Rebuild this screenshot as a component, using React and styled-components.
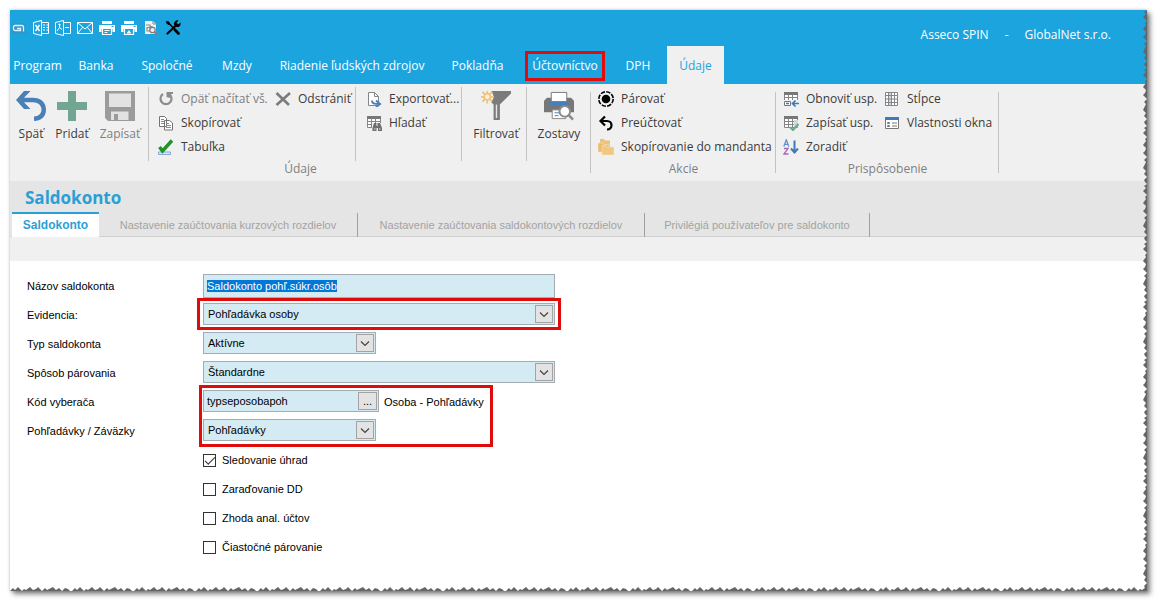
import React, { useEffect, useRef } from "react";
import styled, { createGlobalStyle } from "styled-components";

const GlobalStyle = createGlobalStyle`
  * { box-sizing: border-box; }
  body { margin: 0; background: #fff; }
  button, input, select { font: inherit; color: inherit; margin: 0; }
`;

const uiFont = `"Open Sans", "Noto Sans", sans-serif`;
const formFont = `"Liberation Sans", Arial, sans-serif`;

const Sheet = styled.main`
  position: relative;
  margin: 10px 17px 18px 10px;
  background: #fff;
  font-family: ${uiFont};
  font-size: 12px;
  line-height: 16px;
  color: #3b3b3b;
  box-shadow: 0 0 3px rgba(0, 0, 0, 0.2), 3px 3px 5px rgba(0, 0, 0, 0.5);
`;

const Tear = styled.svg`
  position: absolute;
  right: 0;
  bottom: 0;
  width: ${(p) => (p.$side ? "6px" : "100%")};
  height: ${(p) => (p.$side ? "100%" : "5px")};
  pointer-events: none;
`;

/* header */
const Header = styled.header`
  background: #1ca4df;
  color: #fff;
`;
const TopBar = styled.div`
  display: flex;
  justify-content: space-between;
  height: 36px;
  padding: 0 36px 0 1px;
`;
const QuickTools = styled.div`
  display: flex;
  gap: 6px;
  padding-top: 10px;
`;
const QuickButton = styled.button`
  width: 16px;
  height: 16px;
  padding: 0;
  border: 0;
  background: none;
  svg { display: block; }
`;
const AppTitle = styled.div`
  display: flex;
  gap: 16px;
  padding-top: 17px;
`;
const Menu = styled.nav`
  display: flex;
  height: 38px;
`;
const MenuTab = styled.button`
  position: relative;
  width: ${(p) => p.$w}px;
  margin-left: ${(p) => (p.$active ? 3 : 0)}px;
  padding: 2px 0 0;
  border: 0;
  white-space: nowrap;
  background: ${(p) => (p.$active ? "#f0f0f0" : "none")};
  color: ${(p) => (p.$active ? "#1ca4df" : "#fff")};
`;
const Marker = styled.span`
  position: absolute;
  inset: ${(p) => p.$inset};
  width: ${(p) => (p.$w ? `${p.$w}px` : "auto")};
  border: 3px solid #e00b0b;
  pointer-events: none;
`;

/* ribbon */
const Ribbon = styled.section`
  display: flex;
  height: 97px;
  background: #f0f0f0;
  padding-top: 3px;
`;
const Group = styled.div`
  position: relative;
  display: flex;
  flex-direction: column;
  width: ${(p) => p.$w}px;
  &::after {
    content: "";
    position: absolute;
    right: 0;
    top: 5px;
    bottom: 8px;
    width: 1px;
    background: #c3c3c3;
  }
`;
const GroupBody = styled.div`
  display: flex;
  height: 74px;
`;
const Caption = styled.div`
  text-align: center;
  color: #808080;
`;
const Cluster = styled.div`
  display: flex;
  width: ${(p) => p.$w}px;
  padding-left: ${(p) => p.$pad || 0}px;
  border-right: ${(p) => (p.$line ? "1px solid #c3c3c3" : "0")};
`;
const Column = styled.div`
  display: flex;
  flex-direction: column;
  width: ${(p) => (p.$w ? `${p.$w}px` : "auto")};
`;
const ToolRow = styled.button`
  display: flex;
  align-items: center;
  gap: 7px;
  height: 24px;
  padding: 0;
  border: 0;
  background: none;
  white-space: nowrap;
  color: ${(p) => (p.$muted ? "#7f7f7f" : "#3b3b3b")};
  svg { flex: none; }
`;
const BigTool = styled.button`
  display: flex;
  flex-direction: column;
  align-items: center;
  gap: 5px;
  width: ${(p) => p.$w}px;
  padding: 4px 0 0;
  border: 0;
  background: none;
  white-space: nowrap;
  color: ${(p) => (p.$muted ? "#7f7f7f" : "#3b3b3b")};
  svg { display: block; flex: none; }
`;

/* page title and tabs */
const TitleArea = styled.section`
  background: #e5e5e5;
  border-bottom: 1px solid #cfcfcf;
`;
const Title = styled.h1`
  margin: 0;
  padding: 5px 15px 0;
  height: 31px;
  font-size: 17px;
  line-height: 24px;
  font-weight: 700;
  color: #2a9fd6;
`;
const PageTabs = styled.div`
  display: flex;
  height: 25px;
  padding-left: 2px;
  margin-bottom: -1px;
  font-family: ${formFont};
`;
const PageTab = styled.button`
  width: ${(p) => p.$w}px;
  padding: 0 0 2px;
  border: 0;
  border-top: 2px solid ${(p) => (p.$active ? "#2a9fd6" : "transparent")};
  border-right: ${(p) => (p.$active ? "0" : "1px solid #a0a0a0")};
  background: ${(p) => (p.$active ? "#fff" : "none")};
  color: ${(p) => (p.$active ? "#2a9fd6" : "#a3a3a3")};
  font-weight: ${(p) => (p.$active ? 700 : 400)};
  font-size: ${(p) => (p.$active ? 12 : 11)}px;
  white-space: nowrap;
`;
const Strip = styled.div`
  height: 24px;
  background: #f0f0f0;
`;

/* form */
const Form = styled.form`
  padding: 10px 17px 30px;
  font-family: ${formFont};
  font-size: 11px;
  line-height: 13px;
  color: #000;
`;
const Row = styled.div`
  display: grid;
  grid-template-columns: 176px 1fr;
  align-items: start;
  height: 29px;
`;
const FieldLabel = styled.label`
  padding-top: 9px;
`;
const FieldNote = styled.span`
  padding-top: 9px;
`;
const Marked = styled.div`
  position: relative;
`;
const FieldBox = styled.div`
  position: relative;
  width: ${(p) => p.$w}px;
  height: ${(p) => (p.$tall ? 24 : 22)}px;
  margin-top: 3px;
`;
const fieldStyle = `
  display: block;
  width: 100%;
  height: 100%;
  padding: 0 4px;
  border: 1px solid #a3abb3;
  border-radius: 0;
  outline: 0;
  background: #d5ebf3;
`;
const TextInput = styled.input`
  ${fieldStyle}
  padding: 0 3px;
  &::selection { background: #0078d7; color: #fff; }
`;
const Select = styled.select`
  ${fieldStyle}
  appearance: none;
`;
const Arrow = styled.svg`
  position: absolute;
  top: 2px;
  right: 2px;
  width: 18px;
  height: 18px;
  pointer-events: none;
`;
const Picker = styled.button`
  position: absolute;
  top: 2px;
  right: 2px;
  width: 19px;
  height: 18px;
  padding: 0;
  border: 1px solid #a3a3a3;
  background: #e3e3e3;
  line-height: 13px;
`;
const Inline = styled.div`
  display: flex;
  align-items: flex-start;
  gap: 5px;
`;
const CheckLabel = styled.label`
  display: flex;
  align-items: center;
  gap: 6px;
  height: 29px;
  padding-top: 2px;
  margin-left: 176px;
`;
const CheckBox = styled.input`
  appearance: none;
  width: 13px;
  height: 13px;
  border: 1px solid #333;
  background: #fff;
  display: grid;
  place-items: center;
  &:checked::after {
    content: "";
    width: 9px;
    height: 4px;
    margin-bottom: 3px;
    border: solid #333;
    border-width: 0 0 1px 1px;
    transform: rotate(-45deg);
  }
`;

/* icons */
const Icon = ({ s = 16, box = 16, children }) => (
  <svg width={s} height={s} viewBox={`0 0 ${box} ${box}`} fill="none" aria-hidden="true">
    {children}
  </svg>
);

const LogoIcon = () => (
  <Icon>
    <rect x="1" y="3" width="14" height="11" fill="#3596c6" />
    <path d="M12.500 11.500V7Q12.500 5.500 11 5.500H4Q2.500 5.500 2.500 7V9Q2.500 10.500 4 10.500H9.500V8.500H6" stroke="#d9f2ff" strokeWidth="1.300" />
  </Icon>
);
const ExcelIcon = () => (
  <Icon>
    <path d="M.5 2.500 8.500.5v15l-8-2zM8.500 2.500h7v11h-7M10 5h2m1.500 0H15M10 7.500h2m1.500 0H15M10 10h2m1.500 0H15" stroke="#fff" />
    <path d="m2.500 5 4 6m0-6-4 6" stroke="#fff" strokeWidth="1.400" />
  </Icon>
);
const PdfIcon = () => (
  <Icon>
    <path d="M.5 2.500 8.500.5v15l-8-2zM8.500 2.500h7v11h-7M10 7.500h4" stroke="#fff" />
    <path d="M4.500 4v3.500L2 11m2.500-3.500L7 9.500M3.500 4.500c0-1 2-1 1.500 1" stroke="#fff" />
  </Icon>
);
const MailIcon = () => (
  <Icon>
    <path d="M.5 2.500h15v11H.5zM.5 2.500 8 9l7.500-6.500M.5 13.500 5.800 7.200m9.700 6.300L10.200 7.200" stroke="#fff" />
  </Icon>
);
const PrintIcon = ({ mark }) => (
  <Icon>
    <path d="M3 1h10v3H3zM0 5h16v7h-2.500V9h-11v3H0z" fill="#fff" />
    <path d="M3.500 8.500h9v6h-9z" stroke="#fff" strokeWidth="1.200" fill="#1ca4df" />
    {mark ? <path d="M8 10 10.500 13.500h-5z" fill="#fff" /> : <path d="M5.500 10.500h5M5.500 12.500h3" stroke="#fff" />}
    <path d="M12.500 6.500h2" stroke="#1ca4df" />
  </Icon>
);
const PreviewIcon = () => (
  <Icon>
    <path d="M2 1h8l3 3v10H2z" fill="#f2f2f2" />
    <path d="M10 1v3h3" stroke="#888" />
    <path d="M3 5h4v1.500h2V9H7V7.500H4V11h3" stroke="#8a8a8a" strokeWidth="1.200" />
    <circle cx="9.500" cy="10" r="2.700" fill="#e8f4fa" stroke="#8b7a78" strokeWidth="1.300" />
    <path d="m11.500 12 3 3" stroke="#8b7a78" strokeWidth="2" />
  </Icon>
);
const ToolsIcon = () => (
  <Icon>
    <path d="M3 2.500 13.500 13" stroke="#000" strokeWidth="1.600" />
    <path d="m10 10 3.500 3.500" stroke="#000" strokeWidth="2.800" strokeLinecap="round" />
    <path d="m1 1 3 .5L5 4 3.500 5 1.500 3.500z" fill="#000" />
    <path d="M12 4.500 2.500 13.500" stroke="#000" strokeWidth="2.200" strokeLinecap="round" />
    <path d="M13.500.5A3.500 3.500 0 0 0 9 4.500L11.500 7A3.500 3.500 0 0 0 15.500 2.500L13.500 4.300 11.800 4 11.700 2.400z" fill="#000" />
  </Icon>
);

const UndoBig = () => (
  <Icon s={30} box={30}>
    <path d="M8 0h6.500L8 6.800h9C24.500 6.800 30 11 30 18.500S25 30 18 30v-4.500c4.500 0 7.500-3 7.500-7S22 11.300 17 11.300H8l6.500 6.700H8L0 9z" fill="#4a80b8" />
  </Icon>
);
const PlusBig = () => (
  <Icon s={30} box={30}><path d="M11 0h8v11h11v8H19v11h-8V19H0v-8h11z" fill="#72a693" /></Icon>
);
const SaveBig = () => (
  <Icon s={30} box={30}>
    <path d="M0 0h30v30H3l-3-3z" fill="#9b9b9b" />
    <path d="M4 2.500h22V16H4zM6 20.500h17.500V29H13v-6H9v6H6z" fill="#e2e2e2" />
  </Icon>
);
const FilterBig = () => (
  <Icon s={30} box={31}>
    <path d="M11 0h20v2.500L19.500 14v16H13V14l-4-4z" fill="#7b7b7b" />
    <path d="M16 14v14" stroke="#e6e6e6" strokeWidth="1.500" />
    <circle cx="6.500" cy="6" r="6.500" fill="#f0f0f0" />
    <path d="M6.500-1v14M-.5 6h14M1.500 1l10 10M11.500 1l-10 10" stroke="#eec27a" strokeWidth="1.800" />
    <circle cx="6.500" cy="6" r="3.200" fill="#fff0cf" stroke="#eec27a" strokeWidth="1.500" />
  </Icon>
);
const ReportBig = () => (
  <Icon s={30} box={31}>
    <path d="M3 7h25l3 3v12H0V10z" fill="#777" />
    <path d="M7.500 1.500h16V11h-16z" fill="#fff" stroke="#777" />
    <path d="M6 11h19v4H6z" fill="#477fbd" />
    <path d="M8.500 19.500h14v9h-14z" fill="#fff" stroke="#888" />
    <path d="M11 22.500h6M11 25.500h4" stroke="#477fbd" />
    <circle cx="21.500" cy="21" r="5.500" fill="#fff" stroke="#8b8b8b" strokeWidth="2" />
    <path d="m25.500 25 4.500 4.500" stroke="#8b8b8b" strokeWidth="2.600" />
  </Icon>
);

const ReloadIcon = () => (
  <Icon>
    <path d="M5 3a5.500 5.500 0 1 0 6 0" stroke="#8d8d8d" strokeWidth="2.200" />
    <path d="M8.500 1H15v2h-3v4L8.500 6z" fill="#8d8d8d" />
  </Icon>
);
const CopyIcon = () => (
  <Icon>
    <path d="M1.500 1.500h5l2 2v8h-7zM6.500 5.500h5l3 2.500v7h-8z" fill="#fff" stroke="#747474" />
    <path d="M3 4.500h3M3 6.500h3M3 8.500h3M8 8.500h3M8 10.500h5M8 12.500h5" stroke="#6a93c4" />
  </Icon>
);
const TableCheckIcon = () => (
  <Icon>
    <path d="M.5 13h12v2.500H.5z" fill="#dbe6f7" stroke="#8ba6d4" />
    <path d="m1.500 8 3 4L14 1.500" stroke="#23922b" strokeWidth="3.400" />
  </Icon>
);
const DeleteIcon = () => (
  <Icon><path d="M1.500 2 14 14M15 2 1.500 14" stroke="#7b7b7b" strokeWidth="2.600" /></Icon>
);
const ExportIcon = () => (
  <Icon>
    <path d="M2.500 1.500h6l4 4v9h-10z" fill="#fff" stroke="#858585" />
    <path d="M8.500 1.500v4h4" stroke="#858585" />
    <path d="M6 9.500c0 3 2 3.500 7 3.500m-3-3.500 4 3.500-4 3" stroke="#4a80b8" strokeWidth="2" />
  </Icon>
);
const Grid = () => (
  <>
    <path d="M1.500 2.500h13v10h-13z" fill="#fff" stroke="#858585" />
    <path d="M1 2.500h14" stroke="#777" strokeWidth="3" />
    <path d="M1.500 6.500h13M1.500 9.500h13M5.500 3v9.500M9.500 3v9.500" stroke="#858585" />
  </>
);
const SearchIcon = () => (
  <Icon>
    <Grid />
    <path d="M6 8h10v8H6z" fill="#f0f0f0" />
    <path d="M8 8h2.500v3h1V8H14l2 5v3h-4v-3h-1.500v3H6.500v-3z" fill="#6f6f6f" />
    <path d="M8 14h1.500m3.500 0h1.500" stroke="#eee" />
  </Icon>
);
const RestoreIcon = () => (
  <Icon>
    <Grid />
    <path d="M0 9h16v7H0z" fill="#f0f0f0" />
    <path d="M1.500 10.500h6v4h-6z" fill="#fff" stroke="#777" />
    <path d="M3 12.500h3M9.500 12.500H16M12.500 9.500l-3 3 3 3" stroke="#3f79b8" strokeWidth="1.700" />
  </Icon>
);
const StoreIcon = () => (
  <Icon>
    <Grid />
    <path d="M11 5h4v6l-4 2z" fill="#c9dcd6" />
    <path d="m7 12 3 3 5.500-6" stroke="#72a693" strokeWidth="2.200" />
  </Icon>
);
const SortIcon = () => (
  <Icon>
    <path d="M.8 7.500 3.300.8 5.800 7.500M1.600 5.300H5" stroke="#5f93c9" strokeWidth="1.300" />
    <path d="M1 9.500h4L1 15h4.500" stroke="#a869b5" strokeWidth="1.300" />
    <path d="M11.500 1.500V13M8 9.500l3.500 4 3.500-4" stroke="#3f79b8" strokeWidth="2" />
  </Icon>
);
const ColumnsIcon = () => (
  <Icon>
    <path d="M1.500 1.500h12v13h-12z" fill="#fff" stroke="#858585" />
    <path d="M5 2h3v12H5z" fill="#c8dde5" />
    <path d="M4.500 2v12M7.500 2v12M10.500 2v12M2 4.500h11M2 8h11M2 11.500h11" stroke="#858585" />
  </Icon>
);
const PropsIcon = () => (
  <Icon>
    <path d="M1.500 2.500h13v11h-13z" fill="#fff" stroke="#777" />
    <path d="M1 2h14v3H1z" fill="#3f79b8" />
    <path d="M3.500 7.500h2v1h-2zM3.500 10.500h2v1h-2zM8 8h5M8 11h5" stroke="#777" />
  </Icon>
);
const MatchIcon = () => (
  <Icon>
    <circle cx="8" cy="8" r="7.200" stroke="#000" strokeWidth="1.600" strokeDasharray="4.400 1.250" />
    <circle cx="8" cy="8" r="4.300" fill="#000" />
  </Icon>
);
const RepostIcon = () => (
  <Icon>
    <path d="M3 6h6c6 0 6 8.500 0 8.500" stroke="#000" strokeWidth="2.200" />
    <path d="M7 1.500 2.500 6 7 10.500" stroke="#000" strokeWidth="2.200" />
  </Icon>
);
const FoldersIcon = () => (
  <Icon>
    <path d="M2 0h4l1 1.500h5V8H2z" fill="#eec27a" />
    <path d="M0 4h5l1 1.500h5V13H0z" fill="#e9bc70" stroke="#f6e3bd" strokeWidth=".6" />
    <path d="M4 6.500h4L9 8h7v8H4z" fill="#f1c880" stroke="#f6e3bd" strokeWidth=".6" />
  </Icon>
);

const quickTools = [
  ["Asseco", <LogoIcon />],
  ["Excel", <ExcelIcon />],
  ["PDF", <PdfIcon />],
  ["E-mail", <MailIcon />],
  ["Tlač", <PrintIcon />],
  ["Tlač obrazovky", <PrintIcon mark />],
  ["Náhľad", <PreviewIcon />],
  ["Nastavenia", <ToolsIcon />],
];

const menu = [
  ["Program", 55],
  ["Banka", 62],
  ["Spoločné", 80],
  ["Mzdy", 60],
  ["Riadenie ľudských zdrojov", 170],
  ["Pokladňa", 81],
  ["Účtovníctvo", 94],
  ["DPH", 52],
  ["Údaje", 57],
];

const Tool = ({ icon, children, muted }) => (
  <ToolRow type="button" $muted={muted}>
    {icon}
    {children}
  </ToolRow>
);

const SelectField = ({ id, label, value, w }) => (
  <Row>
    <FieldLabel htmlFor={id}>{label}</FieldLabel>
    <FieldBox $w={w}>
      <Select id={id} defaultValue={value}>
        <option>{value}</option>
      </Select>
      <Arrow viewBox="0 0 18 18" aria-hidden="true">
        <rect x=".5" y=".5" width="17" height="17" fill="#e3e3e3" stroke="#a3a3a3" />
        <path d="m5 7.500 4 4 4-4" fill="none" stroke="#444" strokeWidth="1.200" />
      </Arrow>
    </FieldBox>
  </Row>
);

const Check = ({ children, checked }) => (
  <CheckLabel>
    <CheckBox type="checkbox" defaultChecked={checked} />
    {children}
  </CheckLabel>
);

export default function App() {
  const nameRef = useRef(null);
  useEffect(() => {
    nameRef.current.focus();
    nameRef.current.select();
  }, []);

  return (
    <>
      <GlobalStyle />
      <Sheet>
        <Header>
          <TopBar>
            <QuickTools>
              {quickTools.map(([name, icon]) => (
                <QuickButton key={name} type="button" aria-label={name}>{icon}</QuickButton>
              ))}
            </QuickTools>
            <AppTitle>
              <span>Asseco SPIN</span>
              <span>-</span>
              <span>GlobalNet s.r.o.</span>
            </AppTitle>
          </TopBar>
          <Menu>
            {menu.map(([name, w]) => (
              <MenuTab key={name} type="button" $w={w} $active={name === "Údaje"}>
                {name}
                {name === "Účtovníctvo" && <Marker $inset="5px 7px 3px" />}
              </MenuTab>
            ))}
          </Menu>
        </Header>

        <Ribbon>
          <Group $w={581}>
            <GroupBody>
              <Cluster $w={139} $line>
                <BigTool type="button" $w={42}><UndoBig />Späť</BigTool>
                <BigTool type="button" $w={40}><PlusBig />Pridať</BigTool>
                <BigTool type="button" $w={56} $muted><SaveBig />Zapísať</BigTool>
              </Cluster>
              <Cluster $w={207} $pad={9} $line>
                <Column $w={117}>
                  <Tool icon={<ReloadIcon />} muted>Opäť načítať vš.</Tool>
                  <Tool icon={<CopyIcon />}>Skopírovať</Tool>
                  <Tool icon={<TableCheckIcon />}>Tabuľka</Tool>
                </Column>
                <Column>
                  <Tool icon={<DeleteIcon />}>Odstrániť</Tool>
                </Column>
              </Cluster>
              <Cluster $w={106} $pad={10} $line>
                <Column>
                  <Tool icon={<ExportIcon />}>Exportovať...</Tool>
                  <Tool icon={<SearchIcon />}>Hľadať</Tool>
                </Column>
              </Cluster>
              <Cluster $w={65} $pad={4} $line>
                <BigTool type="button" $w={62}><FilterBig />Filtrovať</BigTool>
              </Cluster>
              <Cluster $w={64}>
                <BigTool type="button" $w={66}><ReportBig />Zostavy</BigTool>
              </Cluster>
            </GroupBody>
            <Caption>Údaje</Caption>
          </Group>
          <Group $w={185}>
            <GroupBody>
              <Cluster $pad={7} $w={184}>
                <Column>
                  <Tool icon={<MatchIcon />}>Párovať</Tool>
                  <Tool icon={<RepostIcon />}>Preúčtovať</Tool>
                  <Tool icon={<FoldersIcon />}>Skopírovanie do mandanta</Tool>
                </Column>
              </Cluster>
            </GroupBody>
            <Caption>Akcie</Caption>
          </Group>
          <Group $w={223}>
            <GroupBody>
              <Cluster $pad={7} $w={222}>
                <Column $w={101}>
                  <Tool icon={<RestoreIcon />}>Obnoviť usp.</Tool>
                  <Tool icon={<StoreIcon />}>Zapísať usp.</Tool>
                  <Tool icon={<SortIcon />}>Zoradiť</Tool>
                </Column>
                <Column>
                  <Tool icon={<ColumnsIcon />}>Stĺpce</Tool>
                  <Tool icon={<PropsIcon />}>Vlastnosti okna</Tool>
                </Column>
              </Cluster>
            </GroupBody>
            <Caption>Prispôsobenie</Caption>
          </Group>
        </Ribbon>

        <TitleArea>
          <Title>Saldokonto</Title>
          <PageTabs>
            <PageTab type="button" $w={87} $active>Saldokonto</PageTab>
            <PageTab type="button" $w={259}>Nastavenie zaúčtovania kurzových rozdielov</PageTab>
            <PageTab type="button" $w={287}>Nastavenie zaúčtovania saldokontových rozdielov</PageTab>
            <PageTab type="button" $w={225}>Privilégiá používateľov pre saldokonto</PageTab>
          </PageTabs>
        </TitleArea>
        <Strip />

        <Form>
          <Row>
            <FieldLabel htmlFor="name">Názov saldokonta</FieldLabel>
            <FieldBox $w={352} $tall>
              <TextInput id="name" ref={nameRef} defaultValue="Saldokonto pohľ.súkr.osôb" />
            </FieldBox>
          </Row>
          <Marked>
            <SelectField id="evidence" label="Evidencia:" value="Pohľadávka osoby" w={352} />
            <Marker $inset="-2px auto -1px 170px" $w={364} />
          </Marked>
          <SelectField id="type" label="Typ saldokonta" value="Aktívne" w={173} />
          <SelectField id="pairing" label="Spôsob párovania" value="Štandardne" w={352} />
          <Marked>
            <Row>
              <FieldLabel htmlFor="code">Kód vyberača</FieldLabel>
              <Inline>
                <FieldBox $w={176}>
                  <TextInput id="code" defaultValue="typseposobapoh" />
                  <Picker type="button" aria-label="Vybrať">...</Picker>
                </FieldBox>
                <FieldNote>Osoba - Pohľadávky</FieldNote>
              </Inline>
            </Row>
            <SelectField id="side" label="Pohľadávky / Záväzky" value="Pohľadávky" w={173} />
            <Marker $inset="-2px auto -2px 172px" $w={294} />
          </Marked>
          <Check checked>Sledovanie úhrad</Check>
          <Check>Zaraďovanie DD</Check>
          <Check>Zhoda anal. účtov</Check>
          <Check>Čiastočné párovanie</Check>
        </Form>

        <Tear aria-hidden="true">
          <defs>
            <pattern id="teethBottom" width="62" height="5" patternUnits="userSpaceOnUse">
              <path d="M0 5 3 2l2 2 3-3 4 4 2-2 2 1 4-3 3 3 3-1 2-2 4 4 3-3 2 2 2-1 4-2 3 3 3-2 3 3 3-3 3 1 2 2z" fill="#666" />
            </pattern>
          </defs>
          <rect width="100%" height="5" fill="url(#teethBottom)" />
        </Tear>
        <Tear $side aria-hidden="true">
          <defs>
            <pattern id="teethRight" width="6" height="58" patternUnits="userSpaceOnUse">
              <path d="M6 0 3 2l2 2-3 3 4 4-2 2 1 2-3 4 3 3-1 3-2 2 4 4-3 3 2 2-1 2-2 4 3 3-2 3 3 3-3 3 1 2 2 2z" fill="#666" />
            </pattern>
          </defs>
          <rect width="6" height="100%" fill="url(#teethRight)" />
        </Tear>
      </Sheet>
    </>
  );
}
